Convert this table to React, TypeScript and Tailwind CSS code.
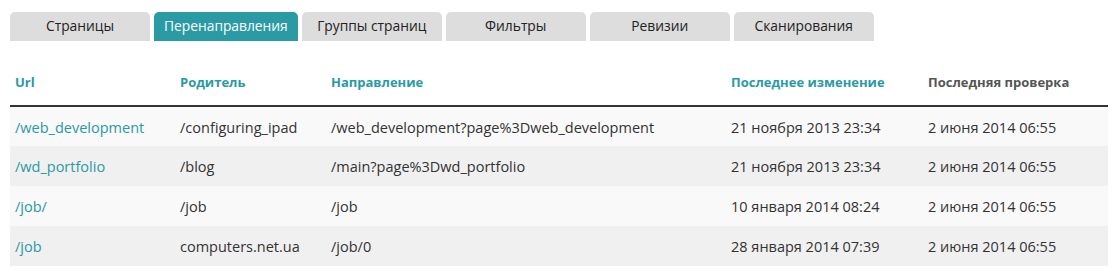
const tabs = [
	"Страницы",
	"Перенаправления",
	"Группы страниц",
	"Фильтры",
	"Ревизии",
	"Сканирования",
];

type Redirect = {
	url: string;
	parent: string;
	target: string;
	changed: string;
	checked: string;
};

const rows: Redirect[] = [
	{
		url: "/web_development",
		parent: "/configuring_ipad",
		target: "/web_development?page%3Dweb_development",
		changed: "21 ноября 2013 23:34",
		checked: "2 июня 2014 06:55",
	},
	{
		url: "/wd_portfolio",
		parent: "/blog",
		target: "/main?page%3Dwd_portfolio",
		changed: "21 ноября 2013 23:34",
		checked: "2 июня 2014 06:55",
	},
	{
		url: "/job/",
		parent: "/job",
		target: "/job",
		changed: "10 января 2014 08:24",
		checked: "2 июня 2014 06:55",
	},
	{
		url: "/job",
		parent: "computers.net.ua",
		target: "/job/0",
		changed: "28 января 2014 07:39",
		checked: "2 июня 2014 06:55",
	},
];

export default function App() {
	const active = 1;

	return (
		<div className="w-[1113px] h-[272px] bg-white font-['Open_Sans',sans-serif] text-[14.5px] text-[#333] px-[10px] pt-[12px]">
			{/* Tabs */}
			<div className="flex gap-[4px]">
				{tabs.map((t, i) => (
					<div
						key={t}
						className={`min-w-[140px] px-[10px] h-[29px] rounded-t-[5px] flex items-center justify-center text-[13.8px] ${
							i === active ? "bg-[#2a9aa4] text-white" : "bg-[#dddddd] text-[#222]"
						}`}>
						{t}
					</div>
				))}
			</div>

			{/* Redirects table */}
			<table className="w-[1098px] mt-[24px] text-left border-collapse">
				<thead>
					<tr className="h-[41px] border-b-2 border-[#333] font-bold text-[13px]">
						<th className="pl-[5px] pb-[5px] w-[170px] text-[#2a9aa4]">Url</th>
						<th className="pb-[5px] w-[151px] text-[#2a9aa4]">Родитель</th>
						<th className="pb-[5px] w-[400px] text-[#2a9aa4]">Направление</th>
						<th className="pb-[5px] w-[197px] text-[#2a9aa4]">Последнее изменение</th>
						<th className="pb-[5px] text-[#555]">Последняя проверка</th>
					</tr>
				</thead>
				<tbody>
					{rows.map((r, i) => (
						<tr
							key={i}
							className={`h-[40px] ${i % 2 === 0 ? "bg-[#f9f9f9]" : "bg-[#f0f0f0]"}`}>
							<td className="pl-[5px] pt-[2px] text-[#2a9aa4]">{r.url}</td>
							<td className="pt-[2px]">{r.parent}</td>
							<td className="pt-[2px]">{r.target}</td>
							<td className="pt-[2px]">{r.changed}</td>
							<td className="pt-[2px]">{r.checked}</td>
						</tr>
					))}
				</tbody>
			</table>
		</div>
	);
}
